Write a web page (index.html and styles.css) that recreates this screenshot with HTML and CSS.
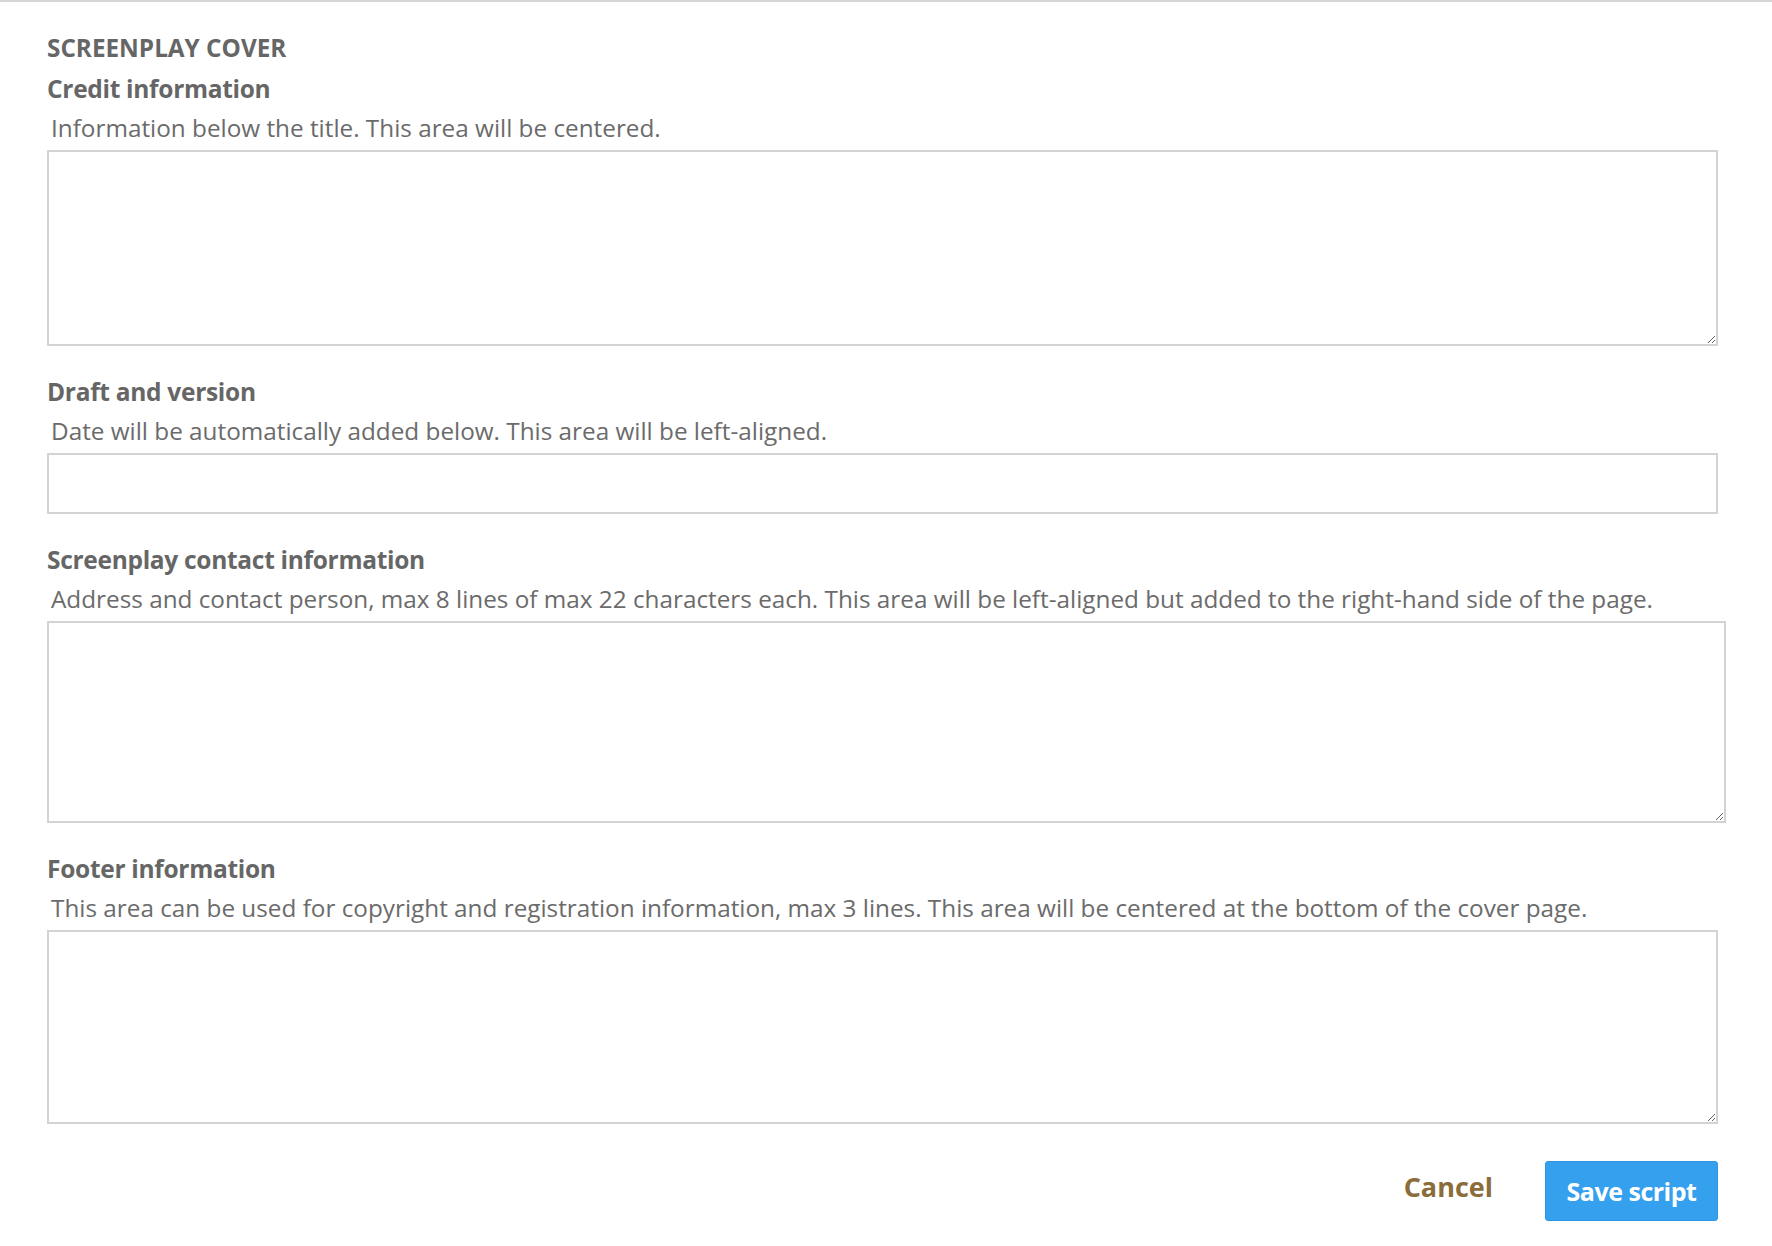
FILE: index.html
```html
<!DOCTYPE html>
<html lang="en">
<head>
  <meta charset="UTF-8">
  <title>Screenplay cover</title>
  <meta name="viewport" content="width=device-width, initial-scale=1">
  <link rel="stylesheet" href="styles.css">
</head>
<body>
<div class="cover-form">
  <h2 class="section-title">SCREENPLAY COVER</h2>

  <div class="field">
    <label for="credit">Credit information</label>
    <p class="help">Information below the title. This area will be centered.</p>
    <textarea id="credit" class="area"></textarea>
  </div>

  <div class="field">
    <label for="draft">Draft and version</label>
    <p class="help">Date will be automatically added below. This area will be left-aligned.</p>
    <input id="draft" class="line" type="text">
  </div>

  <div class="field">
    <label for="contact">Screenplay contact information</label>
    <p class="help">Address and contact person, max 8 lines of max 22 characters each. This area will be left-aligned but added to the right-hand side of the page.</p>
    <textarea id="contact" class="area area-wide"></textarea>
  </div>

  <div class="field">
    <label for="footer">Footer information</label>
    <p class="help">This area can be used for copyright and registration information, max 3 lines. This area will be centered at the bottom of the cover page.</p>
    <textarea id="footer" class="area area-short"></textarea>
  </div>

  <div class="actions">
    <a href="#" class="cancel">Cancel</a>
    <button class="save-btn">Save script</button>
  </div>
</div>
</body>
</html>
```

FILE: styles.css
```css
body {
  font-family: 'Open Sans', sans-serif;
  background: #fff;
  color: #666;
  margin: 0;
  padding: 0;
  border-top: 2px solid #d6d6d6;
}
.cover-form {
  width: 1671px;
  padding: 30px 0 0 47px;
}
.section-title {
  margin: 0 0 9px;
  font-size: 24.3px;
  line-height: 32px;
  font-weight: 700;
  letter-spacing: 0;
  color: #666;
}
.field {
  margin-bottom: 30px;
}
.field label {
  display: block;
  font-size: 24.5px;
  line-height: 32px;
  font-weight: 700;
  letter-spacing: -0.3px;
  margin-bottom: 8px;
}
.help {
  margin: 0 0 7px;
  padding-left: 4px;
  font-size: 24.3px;
  line-height: 30px;
  color: #6b6b6b;
}
.area,
.line {
  display: block;
  box-sizing: border-box;
  width: 100%;
  margin: 0;
  border: 2px solid #d3d3d3;
  border-radius: 0;
  background: #fff;
  font-family: 'Open Sans', sans-serif;
  font-size: 20px;
  color: #555;
  outline: none;
}
.area {
  height: 196px;
  resize: vertical;
}
.area-wide {
  width: 1679px;
  height: 202px;
}
.area-short {
  height: 194px;
}
.line {
  height: 61px;
  padding: 0 12px;
}
.actions {
  display: flex;
  justify-content: flex-end;
  align-items: center;
  gap: 52px;
  margin-top: 37px;
}
.cancel {
  margin-bottom: 10px;
  font-size: 27px;
  font-weight: 700;
  color: #8b6c3b;
  text-decoration: none;
}
.save-btn {
  width: 173px;
  height: 60px;
  background: #35a0ee;
  border: 1px solid #2f96e3;
  border-radius: 3px;
  color: #fff;
  font-family: 'Open Sans', sans-serif;
  font-size: 25px;
  font-weight: 700;
  letter-spacing: -0.5px;
  cursor: pointer;
}
```
